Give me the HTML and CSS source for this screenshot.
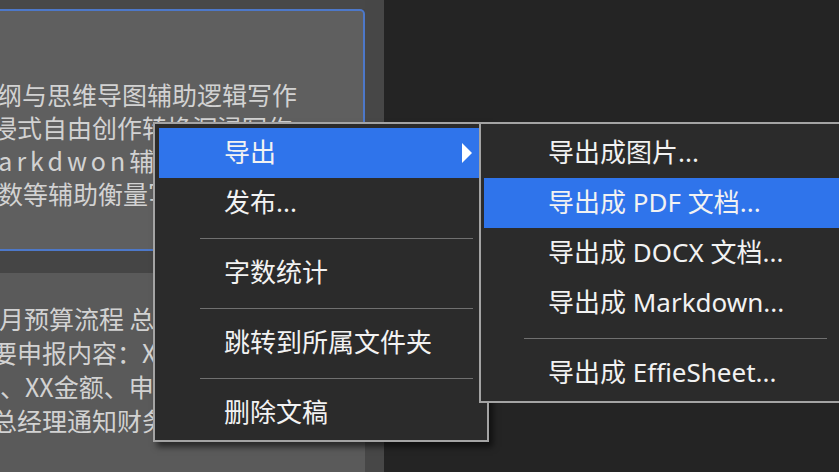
FILE: index.html
```html
<!DOCTYPE html>
<html>

<head>
    <meta charset="UTF-8">
    <title>导出菜单</title>
    <link rel="stylesheet" href="styles.css">
</head>

<body>
    <div class="app">
        <div class="list">
            <div class="topbar"></div>
            <div class="card card-active">
                <p class="line l1">纲与思维导图辅助逻辑写作</p>
                <p class="line l2">沉浸式自由创作转换沉浸写作</p>
                <p class="line l3"><span class="latin">Markdwon</span>辅助排版</p>
                <p class="line l4">函数等辅助衡量写作进度</p>
            </div>
            <div class="card card-next">
                <p class="line m1">审批每月预算流程 总经理审批</p>
                <p class="line m2">需要申报内容：XX项目</p>
                <p class="line m3">项目、XX金额、申请人</p>
                <p class="line m4">总经理通知财务</p>
            </div>
        </div>
        <div class="scroll"></div>
        <div class="editor"></div>
    </div>

    <div class="menu main-menu">
        <div class="item active">
            <span>导出</span>
            <svg class="arrow" width="10" height="20" viewBox="0 0 10 20">
                <polygon points="0,0 10,10 0,20" fill="#fff" />
            </svg>
        </div>
        <div class="item">发布...</div>
        <div class="sep"></div>
        <div class="item">字数统计</div>
        <div class="sep"></div>
        <div class="item">跳转到所属文件夹</div>
        <div class="sep"></div>
        <div class="item">删除文稿</div>
    </div>

    <div class="menu sub-menu">
        <div class="item">导出成图片...</div>
        <div class="item active">导出成 PDF 文档...</div>
        <div class="item">导出成 DOCX 文档...</div>
        <div class="item">导出成 Markdown...</div>
        <div class="sep"></div>
        <div class="item">导出成 EffieSheet...</div>
    </div>
</body>

</html>
```

FILE: styles.css
```css
body,
p {
    margin: 0;
    padding: 0;
}

body {
    width: 839px;
    height: 472px;
    overflow: hidden;
    position: relative;
    font-family: "Noto Sans CJK SC", "Microsoft YaHei", sans-serif;
    background: #242424;
}

.app {
    display: flex;
    height: 472px;
}

.list {
    width: 365px;
    overflow: hidden;
    background: #454545;
}

.topbar {
    height: 9px;
    background: #484848;
}

.card {
    margin-left: -10px;
    padding-left: 10px;
    background: #5d5d5d;
    color: #d2d2d2;
    font-size: 25px;
}

.card-active {
    box-sizing: border-box;
    height: 242px;
    padding-top: 67px;
    border: 2px solid #4d78c9;
    border-left: none;
    border-radius: 0 5px 5px 0;
    background: #5f5f5f;
}

.card-active .line {
    line-height: 33px;
}

.card-next {
    margin-top: 22px;
    padding-top: 28px;
    height: 300px;
    background: #5a5a5a;
}

.card-next .line {
    line-height: 34px;
}

.line {
    white-space: nowrap;
}

.latin {
    letter-spacing: 4px;
}

.l1 {
    margin-left: -3px;
}

.l2 {
    margin-left: -33px;
}

.l3 {
    margin-left: -26px;
}

.l4 {
    margin-left: -27px;
}

.m1 {
    margin-left: -76px;
}

.m2 {
    margin-left: -33px;
}

.m3 {
    margin-left: -50px;
}

.m4 {
    margin-left: -8px;
}

.scroll {
    width: 19px;
    background: #474747;
}

.editor {
    flex: 1;
    background: #242424;
}

.menu {
    position: absolute;
    top: 122px;
    box-sizing: border-box;
    border: 2px solid #a4a4a4;
    background: #2b2b2b;
    color: #f2f2f2;
    font-family: "Noto Sans", "Noto Sans CJK SC", sans-serif;
    font-size: 26px;
}

.main-menu {
    left: 153px;
    width: 336px;
    padding: 4px 4px 2px 4px;
    box-shadow: 4px 5px 6px rgba(0, 0, 0, .55);
    z-index: 2;
}

.sub-menu {
    left: 479px;
    width: 372px;
    padding: 4px 3px 3px 3px;
    z-index: 3;
}

.item {
    display: flex;
    align-items: center;
    height: 50px;
    line-height: 1.2;
    white-space: nowrap;
}

.main-menu .item {
    padding-left: 65px;
    padding-right: 11px;
}

.sub-menu .item {
    padding-left: 64px;
}

.item.active {
    background: #2f74eb;
}

.arrow {
    margin-left: auto;
}

.sep {
    height: 1px;
    background: #707070;
}

.main-menu .sep {
    margin: 10px 10px 9px 41px;
}

.sub-menu .sep {
    margin: 10px 19px 9px 40px;
}
```
